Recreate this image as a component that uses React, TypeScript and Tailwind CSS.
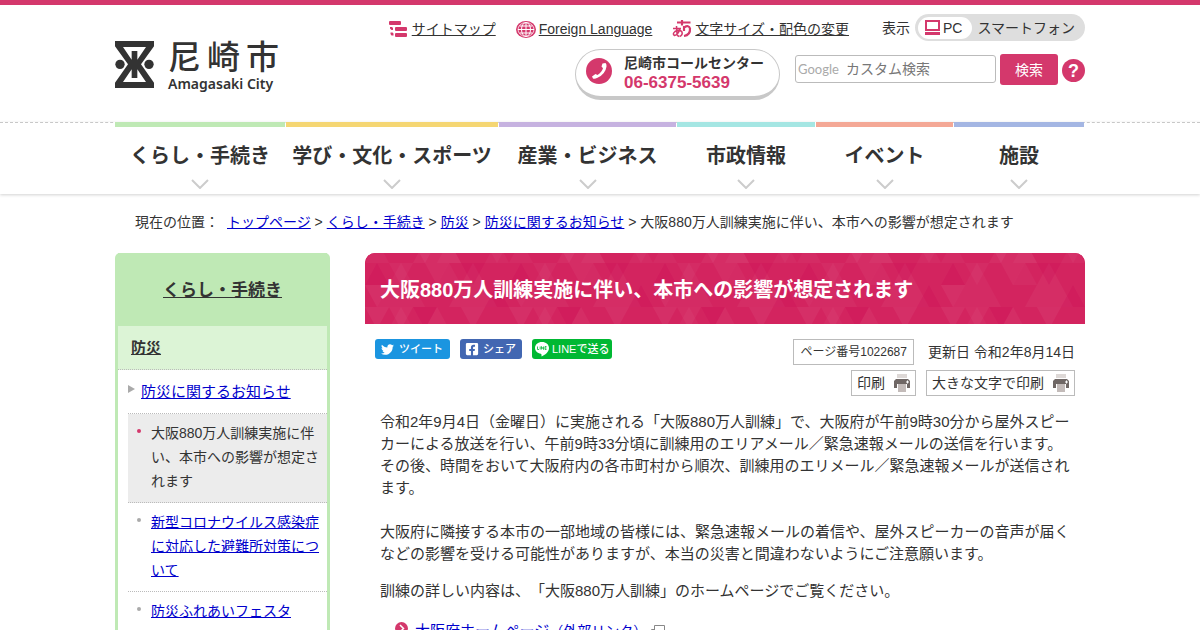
import React from 'react'
import { FaTwitter, FaFacebookSquare } from 'react-icons/fa'

const navItems = [
  { label: 'くらし・手続き', color: 'border-[#bfe9b5]' },
  { label: '学び・文化・スポーツ', color: 'border-[#f5d673]' },
  { label: '産業・ビジネス', color: 'border-[#c6b2e0]' },
  { label: '市政情報', color: 'border-[#a5e6e3]' },
  { label: 'イベント', color: 'border-[#f4a896]' },
  { label: '施設', color: 'border-[#a4b6e3]' },
]

const crumbs = ['トップページ', 'くらし・手続き', '防災', '防災に関するお知らせ']

const pageTitle = '大阪880万人訓練実施に伴い、本市への影響が想定されます'

const CityMark = () => (
  <svg width="39" height="47" viewBox="0 0 117 141" fill="#333" aria-hidden="true">
    <path
      fillRule="evenodd"
      d="M0 0H117V16L78 70L117 125V141H0V125L39 70L0 16ZM24 18L50 56V30H67V56L93 18ZM24 123L50 85V111H67V85L93 123Z"
    />
    <circle cx="15" cy="70" r="14" />
    <circle cx="102" cy="70" r="14" />
  </svg>
)

const SitemapIcon = () => (
  <svg width="18" height="17" viewBox="0 0 18 17" fill="#d4386c" aria-hidden="true">
    <rect width="12" height="4" rx="1" />
    <rect x="6" y="6" width="12" height="4" rx="1" />
    <rect x="6" y="12" width="12" height="4" rx="1" />
    <path d="M1 6h2l1 1v2H2.500L1 7.500ZM1.500 11.500h2l1 1v2h-2l-1-1.500Z" />
  </svg>
)

const GlobeIcon = () => (
  <svg width="20" height="17" viewBox="0 0 20 17" fill="none" aria-hidden="true">
    <ellipse cx="10" cy="8.500" rx="10" ry="8.500" fill="#d4386c" />
    <g stroke="#fff">
      <path d="M10 1.500V15.500M3.500 5H16.500M2 8.500H18M3.500 12H16.500" />
      <ellipse cx="10" cy="8.500" rx="4.500" ry="7" />
      <ellipse cx="10" cy="8.500" rx="8" ry="7" strokeWidth=".7" />
    </g>
  </svg>
)

const LettersIcon = () => (
  <svg width="20" height="18" viewBox="0 0 20 18" fill="none" stroke="#d4386c" aria-hidden="true">
    <path d="M5 2.500H18.500M10 0V5.500" strokeWidth="2.200" />
    <path d="M1 8.500H9M4.500 6L5 14Q5.500 16 7 16.500M8 9Q6 15 2.500 15.500Q0 14 3 11.500Q8 9 10 12Q11 15 7.500 16.500" strokeWidth="1.500" />
    <path d="M12 6V11M12 7.500Q17 4.500 18 8.500Q18.500 15 12 16" strokeWidth="2.200" />
  </svg>
)

const PhoneIcon = () => (
  <svg width="26" height="26" viewBox="0 0 26 26" aria-hidden="true">
    <circle cx="13" cy="13" r="13" fill="#d4386c" />
    <path
      d="M16.500 5.500L19.500 5Q20.800 6 20.500 8.500Q19.500 16 11.500 19.800Q8.500 21.500 7 20.500L6 18.500L9.500 16L11.500 17Q16 14 17 10.200L15.500 8.500Z"
      fill="#fff"
    />
  </svg>
)

const PcIcon = () => (
  <svg width="15" height="15" viewBox="0 0 15 15" aria-hidden="true">
    <rect x="1" y="1" width="13" height="9" fill="none" stroke="#d4386c" strokeWidth="2" />
    <rect y="12" width="15" height="3" fill="#d4386c" />
  </svg>
)

const PrinterIcon = () => (
  <svg width="16" height="18" viewBox="0 0 16 18" aria-hidden="true">
    <rect x="3" width="10" height="4" fill="#ddd8d6" />
    <path d="M2 5H14L16 7V14H0V7Z" fill="#6f6765" />
    <path d="M13.500 6.500v3M12 8h3" stroke="#fff" />
    <rect x="4" y="10" width="8" height="8" fill="#c3bbb9" />
    <path d="M3.500 14V10M12.500 14V10" stroke="#fff" />
  </svg>
)

const TitlePattern = () => (
  <svg className="absolute inset-0 h-full w-full" aria-hidden="true">
    <defs>
      <pattern id="triangles" width="144" height="88" patternUnits="userSpaceOnUse" y="-34">
        <rect width="144" height="88" fill="#d3245f" />
        <g fill="#fff">
          <path d="M0 0H24L12 22ZM48 22H72L60 44ZM96 0H120L108 22ZM0 66H24L12 88Z" fillOpacity=".05" />
          <path d="M12 22L24 44H0ZM36 44L60 88H12ZM84 44L96 66H72ZM132 22L144 44H120Z" fillOpacity=".03" />
          <path d="M72 0L96 44H48ZM108 44L132 88H84ZM24 0H48L36 22ZM60 44H84L72 66Z" fillOpacity=".04" />
          <path d="M120 22H144L132 44ZM24 44H48L36 66ZM84 22L96 44H72ZM36 0L48 22H24Z" fillOpacity=".03" />
        </g>
        <path d="M48 0H72L60 22ZM96 44H120L108 66ZM12 44L24 66H0ZM132 66L144 88H120Z" fill="#c80050" fillOpacity=".2" />
      </pattern>
    </defs>
    <rect width="100%" height="100%" fill="url(#triangles)" />
  </svg>
)

const Header = () => (
  <header className="border-t-5 border-[#d4386c]">
    <div className="mx-auto flex h-[117px] max-w-[970px] justify-between">
      <a href="#" className="flex gap-[14px] pt-9">
        <CityMark />
        <span className="block">
          <span className="flex gap-[6px] text-[33px] leading-[34px] font-medium">
            <span>尼</span>
            <span>崎</span>
            <span>市</span>
          </span>
          <span className="block font-['Noto_Sans'] text-sm leading-[18px] font-semibold">Amagasaki City</span>
        </span>
      </a>

      <div className="flex flex-col items-end gap-2 pt-[9px]">
        <div className="flex items-center text-sm">
          <ul className="mr-[33px] flex gap-5 pt-[3px]">
            <li className="flex items-center gap-[5px]">
              <SitemapIcon />
              <a href="#" className="underline">サイトマップ</a>
            </li>
            <li className="flex items-center gap-[3px]">
              <GlobeIcon />
              <a href="#" className="underline">Foreign Language</a>
            </li>
            <li className="flex items-center gap-[3px]">
              <LettersIcon />
              <a href="#" className="underline">文字サイズ・配色の変更</a>
            </li>
          </ul>
          <span className="mr-[5px]">表示</span>
          <div className="flex h-[27px] items-center rounded-full bg-[#dedede] pr-[10px] pl-[3px]">
            <span className="mr-[5px] flex h-[22px] items-center gap-[3px] rounded-full bg-white pr-[10px] pl-[7px]">
              <PcIcon />
              PC
            </span>
            <a href="#">スマートフォン</a>
          </div>
        </div>

        <div className="flex">
          <div className="mr-[15px] flex h-[51px] w-[205px] gap-3 rounded-full border border-b-4 border-[#c8c8c8] pt-[3px] pl-[10px]">
            <span className="pt-[5px]">
              <PhoneIcon />
            </span>
            <p className="text-sm leading-5 font-bold">
              尼崎市コールセンター
              <span className="block text-[17px] leading-5 text-[#d4386c]">06-6375-5639</span>
            </p>
          </div>
          <form className="flex gap-1 pt-[5px]">
            <div className="relative mt-px h-7">
              <label
                htmlFor="search"
                className="absolute top-[5px] left-[3px] font-['Lato'] text-[13px] leading-[18px] text-[#aaa]"
              >
                Google
              </label>
              <input
                id="search"
                type="text"
                placeholder="カスタム検索"
                className="h-7 w-[201px] rounded-[3px] border border-[#bbb] pl-[50px] text-sm placeholder:text-[#777]"
              />
            </div>
            <button type="submit" className="h-[31px] w-[58px] rounded-[3px] bg-[#d4386c] text-sm text-white">
              検索
            </button>
            <a
              href="#"
              className="mt-[5px] flex h-[23px] w-[23px] items-center justify-center rounded-full bg-[#d4386c] text-lg leading-none font-bold text-white"
            >
              ?
            </a>
          </form>
        </div>
      </div>
    </div>
  </header>
)

const GlobalNav = () => (
  <nav className="border-t border-dashed border-[#c8c8c8] shadow-[0_1px_3px_rgba(0,0,0,0.18)]">
    <ul className="mx-auto -mt-px grid max-w-[970px] grid-cols-[170fr_212fr_177fr_138fr_137fr_130fr] gap-px pr-px">
      {navItems.map((item) => (
        <li key={item.label} className={`border-t-5 border-solid ${item.color}`}>
          <a
            href="#"
            className="flex h-[67px] flex-col items-center gap-2 pt-[14px] text-xl leading-[30px] font-bold whitespace-nowrap"
          >
            {item.label}
            <svg width="18" height="10" viewBox="0 0 18 10" fill="none" stroke="#ccc" strokeWidth="2" aria-hidden="true">
              <path d="M1 1L9 9L17 1" />
            </svg>
          </a>
        </li>
      ))}
    </ul>
  </nav>
)

const Sidebar = () => (
  <aside className="w-[215px] shrink-0 rounded-t-[5px] border-x-3 border-[#bfe9b5] text-[#333]">
    <h2 className="flex h-[73px] items-center justify-center bg-[#bfe9b5] pt-[2px] text-[17px] font-bold">
      <a href="#" className="underline">くらし・手続き</a>
    </h2>
    <h3 className="flex h-11 items-center border-b border-dotted border-[#bbb] bg-[#dcf4d6] pt-[2px] pl-[13px] text-[15px] font-bold">
      <a href="#" className="underline">防災</a>
    </h3>
    <div className="pl-[10px]">
      <p className="flex h-11 items-center gap-[6px] border-b border-dotted border-[#bbb] pt-[2px] text-[15px]">
        <svg width="7" height="8" viewBox="0 0 7 8" className="mb-2" aria-hidden="true">
          <path d="M0 0L7 4L0 8Z" fill="#aaa" />
        </svg>
        <a href="#" className="text-[#0000cc] underline">防災に関するお知らせ</a>
      </p>
      <ul className="text-sm leading-6">
        <li className="flex gap-[10px] border-b border-dotted border-[#bbb] bg-[#ececec] pt-[7px] pr-2 pb-[9px] pl-[9px]">
          <span className="mt-2 h-1 w-1 shrink-0 rounded-full bg-[#d4386c]" />
          <span>{pageTitle}</span>
        </li>
        <li className="flex gap-[10px] border-b border-dotted border-[#bbb] pt-[7px] pr-2 pb-[9px] pl-[9px]">
          <span className="mt-2 h-1 w-1 shrink-0 rounded-full bg-[#aaa]" />
          <a href="#" className="text-[#0000cc] underline">新型コロナウイルス感染症に対応した避難所対策について</a>
        </li>
        <li className="flex gap-[10px] border-b border-dotted border-[#bbb] pt-[7px] pr-2 pb-[9px] pl-[9px]">
          <span className="mt-2 h-1 w-1 shrink-0 rounded-full bg-[#aaa]" />
          <a href="#" className="text-[#0000cc] underline">防災ふれあいフェスタ</a>
        </li>
      </ul>
    </div>
  </aside>
)

const Article = () => (
  <main className="min-w-0 flex-1">
    <div className="relative flex h-[71px] items-center overflow-hidden rounded-t-[10px] bg-[#d3245f] px-[15px] pt-[2px]">
      <TitlePattern />
      <h1 className="relative text-xl font-bold text-white">{pageTitle}</h1>
    </div>

    <div className="flex items-start justify-between px-[10px] pt-[15px]">
      <div className="flex gap-[10px] text-[11px] font-medium text-white">
        <button className="flex h-5 w-[75px] items-center gap-[5px] rounded-[3px] bg-[#1b95e0] pl-[6px]">
          <FaTwitter size={13} />
          ツイート
        </button>
        <button className="flex h-5 w-[62px] items-center gap-1 rounded-[3px] bg-[#4267b2] pl-[5px]">
          <FaFacebookSquare size={14} />
          シェア
        </button>
        <button className="flex h-5 w-20 items-center gap-[3px] rounded-[3px] bg-[#00b833] pl-[3px] whitespace-nowrap">
          <svg width="14" height="15" viewBox="0 0 14 15" className="shrink-0" aria-hidden="true">
            <path d="M7 0C3 0 0 2.600 0 6C0 9 2.500 11.200 5.800 11.800C7 12.100 6.300 13.600 6.600 14.500C10 13 14 10 14 6C14 2.600 11 0 7 0Z" fill="#fff" />
            <path d="M2.500 4.500V7.500H4M5.200 4.500V7.500M6.500 7.500V4.500L8.500 7.500V4.500M11.500 4.500H10V7.500H11.500M10 6H11.500" fill="none" stroke="#00b833" strokeWidth=".8" />
          </svg>
          LINEで送る
        </button>
      </div>
      <div className="flex flex-col items-end gap-[5px] text-sm">
        <div className="flex items-center gap-[14px]">
          <p className="flex h-[26px] items-center border border-[#bbb] px-[6px] text-xs">ページ番号1022687</p>
          <p>更新日 令和2年8月14日</p>
        </div>
        <div className="flex gap-[10px]">
          <button className="flex h-[26px] items-center gap-[9px] border border-[#bbb] px-[5px]">
            印刷
            <PrinterIcon />
          </button>
          <button className="flex h-[26px] items-center gap-[9px] border border-[#bbb] px-[5px]">
            大きな文字で印刷
            <PrinterIcon />
          </button>
        </div>
      </div>
    </div>

    <div className="px-[15px] pt-[15px] text-[15px] leading-[22px]">
      <p>
        令和2年9月4日（金曜日）に実施される「大阪880万人訓練」で、大阪府が午前9時30分から屋外スピーカーによる放送を行い、午前9時33分頃に訓練用のエリアメール／緊急速報メールの送信を行います。
        <br />
        その後、時間をおいて大阪府内の各市町村から順次、訓練用のエリメール／緊急速報メールが送信されます。
        <br />
        <br />
        大阪府に隣接する本市の一部地域の皆様には、緊急速報メールの着信や、屋外スピーカーの音声が届くなどの影響を受ける可能性がありますが、本当の災害と間違わないようにご注意願います。
      </p>
      <p className="mt-[15px]">訓練の詳しい内容は、「大阪880万人訓練」のホームページでご覧ください。</p>
      <ul className="mt-[18px] pl-[15px]">
        <li className="flex gap-[7px]">
          <svg width="13" height="13" viewBox="0 0 13 13" className="mt-[2px]" aria-hidden="true">
            <circle cx="6.500" cy="6.500" r="6.500" fill="#d4386c" />
            <path d="M5 3L8.500 6.500L5 10" fill="none" stroke="#fff" strokeWidth="1.500" />
          </svg>
          <a href="#" className="flex items-center text-[#0000cc] underline">
            大阪府ホームページ<span className="text-sm">（外部リンク）</span>
            <svg width="14" height="12" viewBox="0 0 14 12" className="ml-1" fill="#fff" stroke="#888" aria-hidden="true">
              <path d="M0.500 4.500H9.500V11.500H0.500Z" />
              <path d="M3.500 0.500H13.500V8.500H3.500Z" />
            </svg>
          </a>
        </li>
      </ul>
    </div>
  </main>
)

const App = () => {
  return (
    <div
      lang="ja"
      className="min-h-screen bg-white font-['Liberation_Sans','Noto_Sans_CJK_JP',sans-serif] text-[#333] [text-spacing-trim:space-all]"
    >
      <Header />
      <GlobalNav />
      <div className="mx-auto max-w-[970px]">
        <div className="flex gap-2 px-5 pt-[18px] text-sm">
          <span>現在の位置：</span>
          <p>
            {crumbs.map((crumb) => (
              <React.Fragment key={crumb}>
                <a href="#" className="text-[#0000cc] underline">{crumb}</a>
                {' > '}
              </React.Fragment>
            ))}
            {pageTitle}
          </p>
        </div>
        <div className="flex items-start gap-[35px] pt-[21px]">
          <Sidebar />
          <Article />
        </div>
      </div>
    </div>
  )
}

export default App
